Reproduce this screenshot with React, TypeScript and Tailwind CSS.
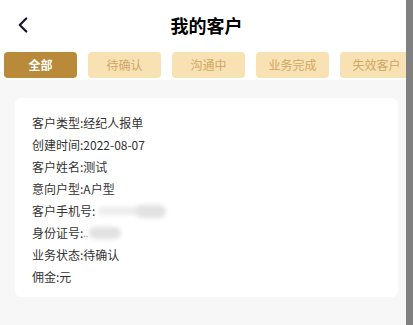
import { ChevronLeft } from "lucide-react";

const tabs = ["全部", "待确认", "沟通中", "业务完成", "失效客户"];

function App() {
  return (
    <div
      className="relative w-full h-screen overflow-hidden bg-white flex flex-col"
      style={{ fontFamily: '"Noto Sans CJK SC", "Noto Sans", sans-serif' }}
    >
      {/* header */}
      <div className="h-[45px] shrink-0 flex items-center relative">
        <ChevronLeft className="absolute left-[10px] top-[12px] w-[26px] h-[26px] text-[#14142b]" strokeWidth={2} />
        <div className="flex-1 text-center text-[18px] font-bold text-black leading-none pt-[4px]">我的客户</div>
      </div>

      {/* tabs */}
      <div className="shrink-0 flex gap-[11px] pl-[4px] pt-[7px] pb-[2px] overflow-hidden">
        {tabs.map((t, i) => (
          <div
            key={t}
            className={
              i === 0
                ? "shrink-0 w-[73px] h-[26px] rounded-[4px] bg-[#b98a39] text-white font-bold text-[12px] flex items-center justify-center"
                : "shrink-0 w-[73px] h-[26px] rounded-[4px] bg-[#f8e1b2] text-[#d0a865] text-[12px] flex items-center justify-center"
            }
          >
            {t}
          </div>
        ))}
      </div>

      {/* list */}
      <div className="flex-1 bg-[#f7f7f7] px-[15px] pt-[18px]">
        <div className="bg-white rounded-[6px] pl-[17px] pt-[14px] pb-[9px] text-[12px] leading-[22px] text-[#333]">
          <div>客户类型:经纪人报单</div>
          <div>创建时间:2022-08-07</div>
          <div>客户姓名:测试</div>
          <div>意向户型:A户型</div>
          <div className="flex items-center">
            <span>客户手机号:</span>
            <span className="ml-[3px] w-[46px] h-[8px] rounded-full bg-[#ececec] blur-[2px]" />
            <span className="ml-[-8px] w-[30px] h-[13px] rounded-full bg-[#e2e2e2] blur-[2px]" />
          </div>
          <div className="flex items-center">
            <span>身份证号:</span>
            <span className="text-[#888] text-[9px] leading-none">..</span>
            <span className="ml-[1px] w-[32px] h-[12px] rounded-full bg-[#e2e2e2] blur-[2px]" />
          </div>
          <div>业务状态:待确认</div>
          <div>佣金:元</div>
        </div>
      </div>

      {/* scrollbar */}
      <div className="absolute right-0 top-0 w-[7px] h-full bg-[#808080]" />
    </div>
  );
}

export default App;
